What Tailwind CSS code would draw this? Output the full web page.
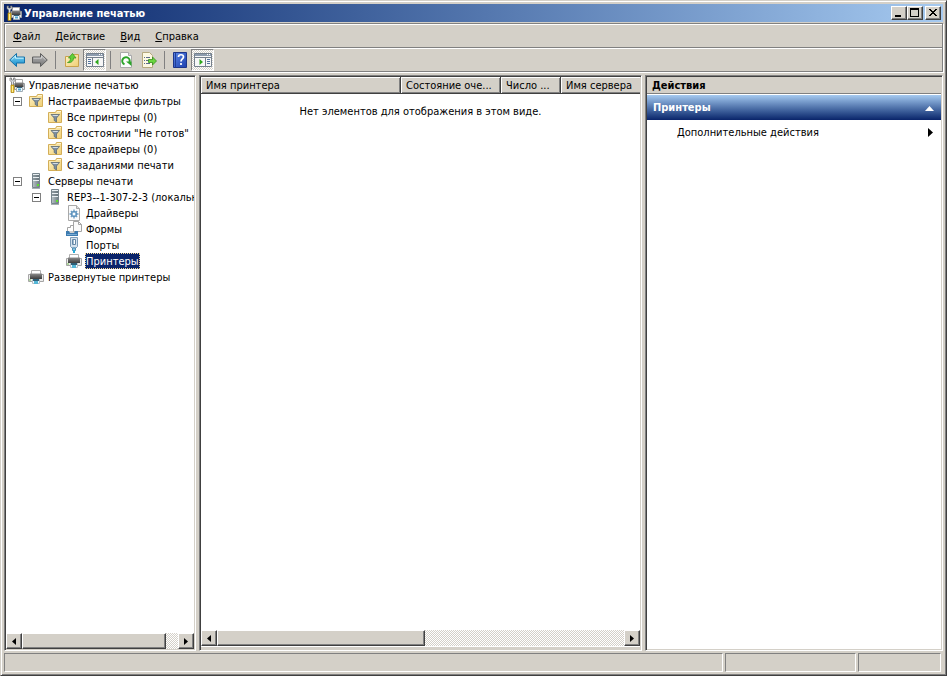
<!DOCTYPE html>
<html lang="ru">
<head>
<meta charset="utf-8">
<title>Управление печатью</title>
<script src="https://cdn.jsdelivr.net/npm/@tailwindcss/browser@4"></script>
</head>
<body class="h-screen overflow-hidden bg-[#d4d0c8] font-['DejaVu_Sans_Condensed','DejaVu_Sans',sans-serif] text-[11px] leading-[14px] text-black">
<svg class="absolute size-0" aria-hidden="true">
  <defs>
    <linearGradient id="gBlue" x1="0" y1="0" x2="0" y2="1"><stop offset="0" stop-color="#8fe0fa"/><stop offset="1" stop-color="#0d86c8"/></linearGradient>
    <linearGradient id="gGray" x1="0" y1="0" x2="0" y2="1"><stop offset="0" stop-color="#b8b8b8"/><stop offset="1" stop-color="#747474"/></linearGradient>
    <linearGradient id="gFold" x1="0" y1="0" x2="1" y2="1"><stop offset="0" stop-color="#fff3c4"/><stop offset="1" stop-color="#efce74"/></linearGradient>
    <linearGradient id="gSrv" x1="0" y1="0" x2="1" y2="0"><stop offset="0" stop-color="#b9c3c8"/><stop offset="1" stop-color="#6d7b82"/></linearGradient>
    <linearGradient id="gHelp" x1="0" y1="0" x2="1" y2="1"><stop offset="0" stop-color="#5a86e6"/><stop offset="1" stop-color="#1c3fae"/></linearGradient>
    <linearGradient id="gPrn" x1="0" y1="0" x2="0" y2="1"><stop offset="0" stop-color="#8c8c8c"/><stop offset="1" stop-color="#3c3c3c"/></linearGradient>
  </defs>
  <symbol id="printer" viewBox="0 0 16 16">
    <path d="M3.500 1.500h9v4h-9z" fill="#fff" stroke="#b0b0b0"/>
    <path d="M.5 5.500h15v7H.5z" fill="#ececec" stroke="#a5a5a5"/>
    <path d="M2 4.500h12V10H2z" fill="url(#gPrn)"/>
    <path d="M4.500 10.500h7v4h-7z" fill="#f4f9fc" stroke="#b3bec6"/>
    <path d="M5 10h6v2H5z" fill="#2f5f78"/><path d="M6 12h4v3H6z" fill="#54b6d6"/><path d="M1 10.500h2v1H1z" fill="#6fc04a"/>
  </symbol>
  <symbol id="root" viewBox="0 0 16 16">
    <path d="M6.500 2.500h7v4h-7z" fill="#fff" stroke="#aaa"/>
    <path d="M5.500 6.500h10v6h-10z" fill="#e3e5e7" stroke="#9a9ea2"/><path d="M6 5.500h8.500V10H6z" fill="url(#gPrn)"/>
    <path d="M7.500 10.500h6v4h-6z" fill="#f4fafd" stroke="#9fadb6"/><path d="M8 10h5v1H8z" fill="#2f5f78"/><path d="M9 11.500h3v2H9z" fill="#54a9d0"/>
    <path d="M1 1v2.500l1.500 1.500v4h2V5L6 3.500V1L4.500 1v2h-2V1z" fill="#dfe3e6" stroke="#666" stroke-width=".7"/>
    <path d="M2 8h3v7.500H2z" fill="#f2c82e" stroke="#a27b0c" stroke-width=".7"/><path d="M3 9h1v6H3z" fill="#ffef9a"/>
  </symbol>
  <symbol id="filter" viewBox="0 0 16 16">
    <path d="M1.500 3.500h7l1-2h5v12h-13z" fill="url(#gFold)" stroke="#d3ae58"/>
    <path d="M10 2.500h4" stroke="#fff6d5"/>
    <path d="M4 5.500h8.500L9.500 9v4l-2.300-1.500V9z" fill="#7d8fa0" stroke="#52626f" stroke-width=".7"/><path d="M5 6h6.500L10.500 7h-4z" fill="#d3dde6"/>
  </symbol>
  <symbol id="server" viewBox="0 0 16 16">
    <path d="M4.500 .5h7v14h-7z" fill="url(#gSrv)" stroke="#77858c"/>
    <path d="M5 1.500h6M5 4.500h6M5 7.500h6" stroke="#e9eff2"/><path d="M5 3h6M5 6h6" stroke="#5b686f" stroke-width=".8"/>
    <path d="M9 11h2v2H9z" fill="#5ee02e"/><path d="M4 15.500h8" stroke="#a8b0b4"/>
  </symbol>
  <symbol id="driver" viewBox="0 0 16 16">
    <path d="M2.500 .5h8l3 3v12h-11z" fill="#fafafa" stroke="#a9a9a9"/><path d="M10.500 .5v3h3" fill="#ddd" stroke="#a9a9a9"/>
    <path d="M8 4.500v9M3.500 9h9M4.900 5.900l6.200 6.200M11.100 5.900l-6.200 6.200" stroke="#6b9cc4" stroke-width="1.400"/>
    <circle cx="8" cy="9" r="2.700" fill="#86b2d4" stroke="#5288b3" stroke-width=".8"/><circle cx="8" cy="9" r="1.200" fill="#fff"/>
  </symbol>
  <symbol id="forms" viewBox="0 0 16 16">
    <path d="M1.500 11V6.500h3v-2h4V11z" fill="#fff" stroke="#a2a2a2"/>
    <path d="M7.500 .5h5l3 3v7h-8z" fill="#fafafa" stroke="#a4a4a4"/><path d="M12.500 .5v3h3" fill="none" stroke="#a4a4a4"/>
    <path d="M0 10h3l1 2h4l1-2h3v5H0z" fill="#3d7bb0"/><path d="M1 13h10v1H1z" fill="#79acd5"/>
  </symbol>
  <symbol id="port" viewBox="0 0 16 16">
    <path d="M4.500 .5h7v9l-1.500 1.500h-4L4.500 9.500z" fill="#d5e2ee" stroke="#7e9db9"/>
    <path d="M6.500 2.500h3v5h-3z" fill="#fff" stroke="#6587a6"/><path d="M7 3h1v4H7z" fill="#9fb9d0"/>
    <path d="M6.500 11h3v2.500h-3z" fill="#8cc4e0" stroke="#4f8fb8"/><path d="M7 13h2v3H7z" fill="#28acd8"/>
  </symbol>
  <symbol id="panel" viewBox="0 0 18 16">
    <path d="M.5 1.500h17v13H.5z" fill="#f7f7f7" stroke="#75808c"/><path d="M1 2h16v2H1z" fill="#8d9cae"/><path d="M13 2.500h1M15 2.500h1" stroke="#fff"/>
    <path d="M1 5.500h16" stroke="#75808c"/>
  </symbol>
</svg>

<div class="flex h-full flex-col border border-t-[#d4d0c8] border-l-[#d4d0c8] border-r-[#404040] border-b-[#404040] p-[3px] shadow-[inset_1px_1px_0_#fff,inset_-1px_-1px_0_#808080]">
  <header class="flex h-[18px] shrink-0 items-center bg-linear-to-r from-[#0a246a] to-[#a6caf0] pr-[2px] pl-[2px]">
    <svg class="size-4 shrink-0"><use href="#root"/></svg>
    <h1 class="ml-[2px] flex-1 truncate pt-[2px] font-bold text-white">Управление печатью</h1>
    <button aria-label="Свернуть" class="flex h-[14px] w-4 items-center justify-center border border-t-white border-l-white border-r-[#404040] border-b-[#404040] bg-[#d4d0c8] shadow-[inset_-1px_-1px_0_#808080]"><svg class="h-3 w-3 shrink-0" viewBox="0 0 12 12"><path d="M2 8h6v2H2z"/></svg></button>
    <button aria-label="Развернуть" class="flex h-[14px] w-4 items-center justify-center border border-t-white border-l-white border-r-[#404040] border-b-[#404040] bg-[#d4d0c8] shadow-[inset_-1px_-1px_0_#808080]"><svg class="h-3 w-3 shrink-0" viewBox="0 0 12 12"><path d="M1 1h9v9H1zM2 3v6h7V3z" fill-rule="evenodd"/></svg></button>
    <button aria-label="Закрыть" class="ml-[2px] flex h-[14px] w-4 items-center justify-center border border-t-white border-l-white border-r-[#404040] border-b-[#404040] bg-[#d4d0c8] shadow-[inset_-1px_-1px_0_#808080]"><svg class="h-3 w-3 shrink-0" viewBox="0 0 12 12" shape-rendering="crispEdges"><path d="M2 2h2v1h1v1h2V3h1V2h2v1H9v1H8v1H7v1h1v1h1v1h1v1H8V8H7V7H5v1H4v1H2V8h1V7h1V6h1V5H4V4H3V3H2z"/></svg></button>
  </header>

  <div class="mt-px shrink-0 border border-[#808080] shadow-[1px_1px_0_#fff,inset_1px_1px_0_#fff]">
    <nav class="flex h-6 items-center gap-px border-b border-[#808080] pl-px">
      <button class="px-[7px] pt-[2px]"><u>Ф</u>айл</button>
      <button class="px-[7px] pt-[2px]"><u>Д</u>ействие</button>
      <button class="px-[7px] pt-[2px]"><u>В</u>ид</button>
      <button class="px-[7px] pt-[2px]"><u>С</u>правка</button>
    </nav>
    <div class="flex h-[23px] items-center border-t border-white" role="toolbar" aria-label="Инструменты">
      <button aria-label="Назад" class="flex w-[23px] justify-center"><svg class="size-4" viewBox="0 0 16 16"><path d="M.7 8L7.500 1.500v3.500h8v6h-8v3.500z" fill="url(#gBlue)" stroke="#1671a8"/><path d="M2.500 7.800L6.500 4v2.200h8" fill="none" stroke="#c5f2ff"/></svg></button>
      <button aria-label="Вперёд" class="flex w-[23px] justify-center"><svg class="size-4" viewBox="0 0 16 16"><path d="M15.300 8L8.500 1.500v3.500h-8v6h8v3.500z" fill="url(#gGray)" stroke="#5e5e5e"/><path d="M1.500 6.200h8V4l4 3.800" fill="none" stroke="#d0d0d0"/></svg></button>
      <span class="mx-1 h-[18px] w-px bg-[#808080]"></span>
      <button aria-label="На уровень вверх" class="flex w-[23px] justify-center"><svg class="size-4" viewBox="0 0 16 16"><path d="M1.500 4.500h6l1.500-2h5.500v12h-13z" fill="url(#gFold)" stroke="#c9a24c"/><path d="M3.500 10.500c2-.5 3-2 3-4.500H4.500L8.500 1.500 12 6h-2.500c0 3-2 5-6 4.500z" fill="#62cf3a" stroke="#3a9a20" stroke-width=".8"/></svg></button>
      <button aria-label="Дерево консоли" aria-pressed="true" class="flex h-[22px] w-[23px] items-center justify-center border border-t-[#808080] border-l-[#808080] border-r-white border-b-white bg-[repeating-conic-gradient(#fff_0_25%,#d4d0c8_0_50%)] bg-[length:2px_2px]"><svg class="h-4 w-[18px]" viewBox="0 0 18 16"><use href="#panel"/><path d="M6.500 6v8" stroke="#75808c"/><path d="M2 7.500h3M2 9.500h3M2 11.500h3" stroke="#52739c"/><path d="M12.500 7v6L9 10z" fill="#2fa71c"/></svg></button>
      <span class="mr-[3px] ml-1 h-[18px] w-px bg-[#808080]"></span>
      <button aria-label="Обновить" class="flex w-[23px] justify-center"><svg class="size-4" viewBox="0 0 16 16"><path d="M2.500 .5h8l3 3v12h-11z" fill="#fcfcfc" stroke="#aaa"/><path d="M10.500 .5v3h3" fill="#ddd" stroke="#aaa"/><path d="M6.500 12.300A3.700 3.700 0 1 1 11.500 10" fill="none" stroke="#2aa428" stroke-width="2"/><path d="M8 9.500h5.500v4.500z" fill="#2aa428"/></svg></button>
      <button aria-label="Экспортировать список" class="flex w-[23px] justify-center"><svg class="size-4" viewBox="0 0 16 16"><path d="M1.500 .5h7l3 3v12h-10z" fill="#fcf8e2" stroke="#b5a97f"/><path d="M3 5.500h1M5 5.500h4M3 8.500h1M5 8.500h3M3 11.500h1M5 11.500h4" stroke="#5c6b8c"/><path d="M7.500 7.500h4V5l4 4-4 4v-2.500h-4z" fill="#6bd63e" stroke="#33901c" stroke-width=".8"/></svg></button>
      <span class="mr-[3px] ml-1 h-[18px] w-px bg-[#808080]"></span>
      <button aria-label="Справка" class="flex w-[23px] justify-center"><svg class="size-4" viewBox="0 0 16 16"><path d="M1.500 .5h13v15h-13z" fill="url(#gHelp)" stroke="#1c358a"/><path d="M3.500 1v14" stroke="#223f96"/><path d="M6.500 5c0-3 5-3 5 0 0 2-2.500 2-2.500 4.500M9 11v2" fill="none" stroke="#fff" stroke-width="1.700"/></svg></button>
      <button aria-label="Панель действий" aria-pressed="true" class="flex h-[22px] w-[23px] items-center justify-center border border-t-[#808080] border-l-[#808080] border-r-white border-b-white bg-[repeating-conic-gradient(#fff_0_25%,#d4d0c8_0_50%)] bg-[length:2px_2px]"><svg class="h-4 w-[18px]" viewBox="0 0 18 16"><use href="#panel"/><path d="M11.500 6v8" stroke="#75808c"/><path d="M13 7.500h3M13 9.500h3M13 11.500h3" stroke="#52739c"/><path d="M5.500 7v6L9 10z" fill="#2fa71c"/></svg></button>
    </div>
  </div>

  <main class="mt-[3px] flex min-h-0 flex-1 gap-[3px]">
    <section aria-label="Дерево консоли" class="flex w-[192px] shrink-0 flex-col border border-t-[#808080] border-l-[#808080] border-r-white border-b-white bg-[#404040] pt-px pl-px">
      <div class="flex min-h-0 flex-1 flex-col border-r border-b border-[#d4d0c8] bg-white">
      <ul class="min-h-0 flex-1 overflow-hidden whitespace-nowrap">
        <li class="flex h-4 items-center gap-[3px] pl-[3px]"><svg class="size-4 shrink-0"><use href="#root"/></svg><button class="px-px pt-[2px]">Управление печатью</button></li>
        <li class="flex h-4 items-center gap-[3px] pl-[7px]"><button aria-label="Свернуть узел" class="mr-[3px] flex size-[9px] shrink-0 items-center justify-center border border-[#808080]"><span class="h-px w-[5px] bg-black"></span></button><svg class="size-4 shrink-0"><use href="#filter"/></svg><button class="px-px pt-[2px]">Настраиваемые фильтры</button></li>
        <li class="flex h-4 items-center gap-[3px] pl-[41px]"><svg class="size-4 shrink-0"><use href="#filter"/></svg><button class="px-px pt-[2px]">Все принтеры (0)</button></li>
        <li class="flex h-4 items-center gap-[3px] pl-[41px]"><svg class="size-4 shrink-0"><use href="#filter"/></svg><button class="px-px pt-[2px]">В состоянии "Не готов"</button></li>
        <li class="flex h-4 items-center gap-[3px] pl-[41px]"><svg class="size-4 shrink-0"><use href="#filter"/></svg><button class="px-px pt-[2px]">Все драйверы (0)</button></li>
        <li class="flex h-4 items-center gap-[3px] pl-[41px]"><svg class="size-4 shrink-0"><use href="#filter"/></svg><button class="px-px pt-[2px]">С заданиями печати</button></li>
        <li class="flex h-4 items-center gap-[3px] pl-[7px]"><button aria-label="Свернуть узел" class="mr-[3px] flex size-[9px] shrink-0 items-center justify-center border border-[#808080]"><span class="h-px w-[5px] bg-black"></span></button><svg class="size-4 shrink-0"><use href="#server"/></svg><button class="px-px pt-[2px]">Серверы печати</button></li>
        <li class="flex h-4 items-center gap-[3px] pl-[26px]"><button aria-label="Свернуть узел" class="mr-[3px] flex size-[9px] shrink-0 items-center justify-center border border-[#808080]"><span class="h-px w-[5px] bg-black"></span></button><svg class="size-4 shrink-0"><use href="#server"/></svg><button class="px-px pt-[2px]">REP3--1-307-2-3 (локальный)</button></li>
        <li class="flex h-4 items-center gap-[3px] pl-[60px]"><svg class="size-4 shrink-0"><use href="#driver"/></svg><button class="px-px pt-[2px]">Драйверы</button></li>
        <li class="flex h-4 items-center gap-[3px] pl-[60px]"><svg class="size-4 shrink-0"><use href="#forms"/></svg><button class="px-px pt-[2px]">Формы</button></li>
        <li class="flex h-4 items-center gap-[3px] pl-[60px]"><svg class="size-4 shrink-0"><use href="#port"/></svg><button class="px-px pt-[2px]">Порты</button></li>
        <li class="flex h-4 items-center gap-[3px] pl-[60px]"><svg class="size-4 shrink-0"><use href="#printer"/></svg><button class="bg-[#0a246a] px-px pt-[2px] text-white outline-1 -outline-offset-1 outline-dotted outline-[#f5db95]">Принтеры</button></li>
        <li class="flex h-4 items-center gap-[3px] pl-[22px]"><svg class="size-4 shrink-0"><use href="#printer"/></svg><button class="px-px pt-[2px]">Развернутые принтеры</button></li>
      </ul>
      <div class="flex h-4 shrink-0 bg-[repeating-conic-gradient(#fff_0_25%,#d4d0c8_0_50%)] bg-[length:2px_2px]">
        <button aria-label="Прокрутить влево" class="flex w-4 items-center justify-center border border-t-white border-l-white border-r-[#404040] border-b-[#404040] bg-[#d4d0c8] shadow-[inset_-1px_-1px_0_#808080]"><svg class="h-[7px] w-1" viewBox="0 0 4 7"><path d="M4 0v7L0 3.500z"/></svg></button>
        <div class="w-36 border border-t-white border-l-white border-r-[#404040] border-b-[#404040] bg-[#d4d0c8] shadow-[inset_-1px_-1px_0_#808080]"></div>
        <button aria-label="Прокрутить вправо" class="ml-auto flex w-4 items-center justify-center border border-t-white border-l-white border-r-[#404040] border-b-[#404040] bg-[#d4d0c8] shadow-[inset_-1px_-1px_0_#808080]"><svg class="h-[7px] w-1" viewBox="0 0 4 7"><path d="M0 0v7l4-3.500z"/></svg></button>
      </div>
      </div>
    </section>

    <section aria-label="Список принтеров" class="flex min-w-0 flex-1 flex-col border border-t-[#808080] border-l-[#808080] border-r-white border-b-white bg-[#404040] pt-px pl-px">
      <div class="flex min-h-0 flex-1 flex-col border-r border-[#d4d0c8] bg-white">
      <table class="w-full table-fixed border-separate border-spacing-0 text-left">
        <thead>
          <tr class="bg-[#d4d0c8]">
            <th class="w-[200px] border-r border-b border-[#404040] px-[5px] pt-[2px] pb-0 font-normal whitespace-nowrap shadow-[inset_1px_1px_0_#fff,inset_-1px_-1px_0_#808080]">Имя принтера</th>
            <th class="w-[100px] border-r border-b border-[#404040] px-[5px] pt-[2px] pb-0 font-normal whitespace-nowrap shadow-[inset_1px_1px_0_#fff,inset_-1px_-1px_0_#808080]">Состояние оче...</th>
            <th class="w-[60px] border-r border-b border-[#404040] px-[5px] pt-[2px] pb-0 font-normal whitespace-nowrap shadow-[inset_1px_1px_0_#fff,inset_-1px_-1px_0_#808080]">Число ...</th>
            <th class="border-b border-[#404040] px-[5px] pt-[2px] pb-0 font-normal whitespace-nowrap shadow-[inset_1px_1px_0_#fff,inset_0_-1px_0_#808080]">Имя сервера</th>
          </tr>
        </thead>
        <tbody><tr><td colspan="4" class="px-0 pt-[11px] pb-0 text-center">Нет элементов для отображения в этом виде.</td></tr></tbody>
      </table>
      <div class="mt-auto flex h-4 shrink-0 bg-[repeating-conic-gradient(#fff_0_25%,#d4d0c8_0_50%)] bg-[length:2px_2px]">
        <button aria-label="Прокрутить влево" class="flex w-4 items-center justify-center border border-t-white border-l-white border-r-[#404040] border-b-[#404040] bg-[#d4d0c8] shadow-[inset_-1px_-1px_0_#808080]"><svg class="h-[7px] w-1" viewBox="0 0 4 7"><path d="M4 0v7L0 3.500z"/></svg></button>
        <div class="w-52 border border-t-white border-l-white border-r-[#404040] border-b-[#404040] bg-[#d4d0c8] shadow-[inset_-1px_-1px_0_#808080]"></div>
        <button aria-label="Прокрутить вправо" class="ml-auto flex w-4 items-center justify-center border border-t-white border-l-white border-r-[#404040] border-b-[#404040] bg-[#d4d0c8] shadow-[inset_-1px_-1px_0_#808080]"><svg class="h-[7px] w-1" viewBox="0 0 4 7"><path d="M0 0v7l4-3.500z"/></svg></button>
      </div>
      <div class="h-1 shrink-0 border-t border-white bg-[#d4d0c8]"></div>
      </div>
    </section>

    <aside class="flex w-[298px] shrink-0 flex-col border border-t-[#808080] border-l-[#808080] border-r-white border-b-white bg-[#404040] pt-px pl-px">
      <div class="flex-1 border-r border-b border-[#d4d0c8] bg-white">
      <h2 class="h-[17px] border-b border-[#808080] bg-[#d4d0c8] pt-[2px] pl-[5px] font-bold">Действия</h2>
      <button class="mt-px flex h-[25px] w-full items-center justify-between bg-linear-to-b from-[#a6caf0] to-[#0a246a] pt-px pr-[7px] pl-[6px] font-bold text-white">Принтеры<svg class="h-[5px] w-[9px]" viewBox="0 0 9 5"><path d="M0 5h9L4.500 0z" fill="#fff"/></svg></button>
      <button class="mt-1 flex h-4 w-full items-center justify-between pt-px pr-2 pl-[30px]">Дополнительные действия<svg class="h-[9px] w-[5px]" viewBox="0 0 5 9"><path d="M0 0v9l5-4.500z"/></svg></button>
      </div>
    </aside>
  </main>

  <footer class="mt-[2px] flex h-[19px] shrink-0 gap-[2px] pr-[2px]">
    <div class="flex-1 border border-t-[#808080] border-l-[#808080] border-r-white border-b-white"></div>
    <div class="w-[131px] border border-t-[#808080] border-l-[#808080] border-r-white border-b-white"></div>
    <div class="w-[83px] border border-t-[#808080] border-l-[#808080] border-r-white border-b-white"></div>
  </footer>
</div>
</body>
</html>
